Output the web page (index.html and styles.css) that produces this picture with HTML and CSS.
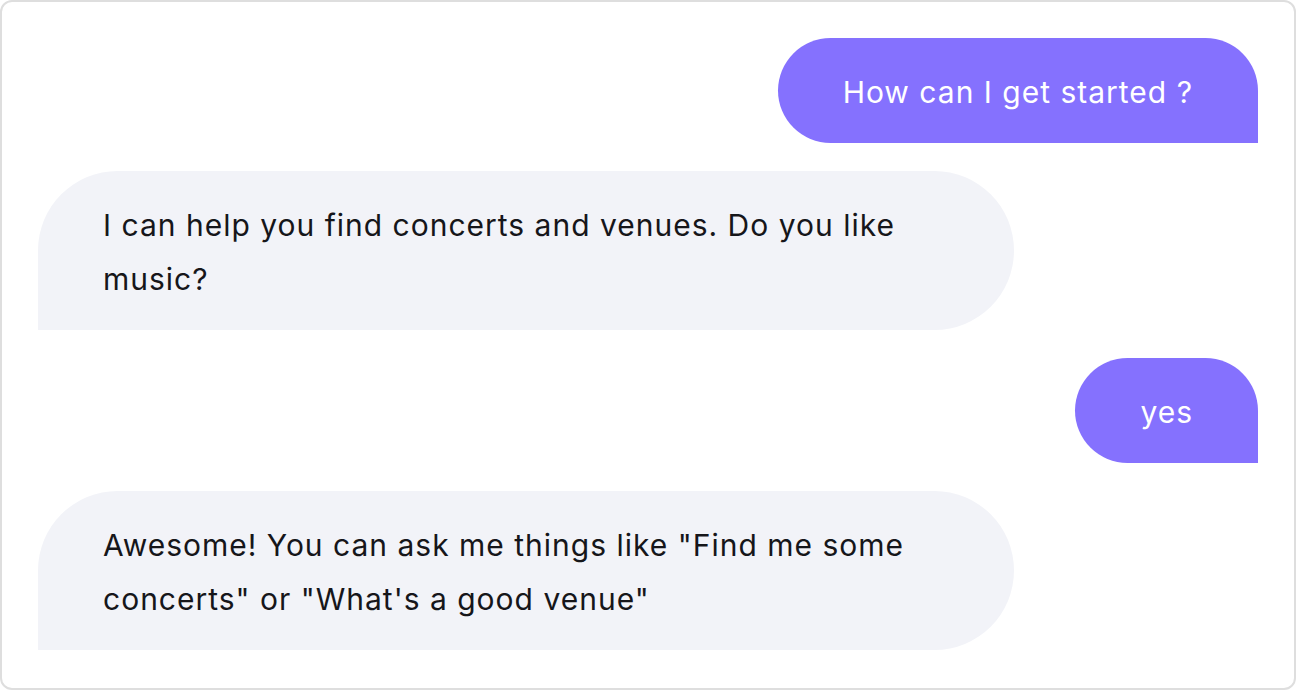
FILE: index.html
```html
<!DOCTYPE html>
<html lang="en">
<head>
<meta charset="utf-8">
<title>Chat</title>
<link rel="stylesheet" href="styles.css">
</head>
<body>
<div class="chat">
  <div class="msg user">How can I get started ?</div>
  <div class="msg bot">I can help you find concerts and venues. Do you like music?</div>
  <div class="msg user">yes</div>
  <div class="msg bot">Awesome! You can ask me things like "Find me some concerts" or "What's a good venue"</div>
</div>
</body>
</html>
```

FILE: styles.css
```css
html, body {
  margin: 0;
  padding: 0;
  background: #ffffff;
}

.chat {
  box-sizing: border-box;
  width: 1296px;
  height: 690px;
  border: 2px solid #dedede;
  border-radius: 12px;
  padding: 36px;
  display: flex;
  flex-direction: column;
  gap: 28px;
  font-family: Inter, "Noto Sans", sans-serif;
  font-size: 30px;
  letter-spacing: 1px;
  line-height: 54px;
}

.msg {
  box-sizing: border-box;
  max-width: 80%;
  padding: 27px 65px 24px;
}

.user {
  align-self: flex-end;
  background: #8571fe;
  color: #ffffff;
  border-radius: 80px 80px 0 80px;
  text-align: center;
}

.bot {
  align-self: flex-start;
  width: 80%;
  background: #f2f3f8;
  color: #16161a;
  border-radius: 80px 80px 80px 0;
}
```
